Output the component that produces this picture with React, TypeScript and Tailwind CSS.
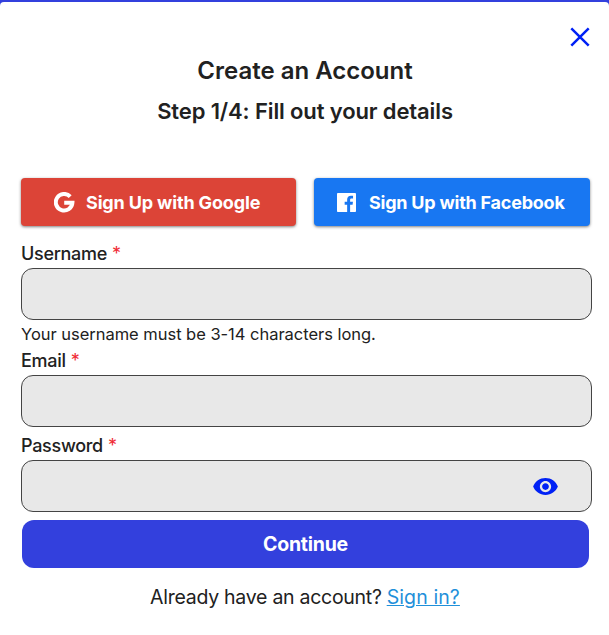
import { useState } from 'react'
import { MdVisibility } from 'react-icons/md'

const inputClass = 'block h-[52px] w-[571px] rounded-[12px] border border-[#444] bg-[#e8e8e8] px-4 text-lg outline-none'

function GoogleIcon() {
  return (
    <svg viewBox='0 0 21 21' className='h-[21px] w-[21px]' stroke='currentColor' strokeWidth='4' fill='none'>
      <path d='M16.2 4.6A8.3 8.3 0 1 0 18.4 10.8H10.2' />
    </svg>
  )
}

function FacebookIcon() {
  return (
    <svg viewBox='0 0 24 24' className='h-[19px] w-[19px]' fill='currentColor'>
      <path d='M22.676 0H1.324C.593 0 0 .593 0 1.324v21.352C0 23.408.593 24 1.324 24h11.494v-9.294H9.689v-3.621h3.129V8.41c0-3.099 1.894-4.785 4.659-4.785 1.325 0 2.464.097 2.796.141v3.24h-1.921c-1.5 0-1.792.721-1.792 1.771v2.311h3.584l-.465 3.63H16.56V24h6.115c.733 0 1.325-.592 1.325-1.324V1.324C24 .593 23.408 0 22.676 0' />
    </svg>
  )
}

function FieldLabel({ id, label }: { id: string, label: string }) {
  return (
    <label htmlFor={id} className='flex h-6 items-center gap-[5px] whitespace-nowrap text-[18px] font-medium leading-6 tracking-[-0.3px]'>
      <span>{label}</span>
      <span className='pb-px font-normal text-[#f02b35]'>*</span>
    </label>
  )
}

function App() {
  const [showPassword, setShowPassword] = useState(false)

  return (
    <div className="h-[635px] w-[609px] overflow-hidden bg-[#3340dd] pt-[2px] font-['Inter',sans-serif] text-[#212121]">
      <div className='flex h-[633px] flex-col rounded-t-[4px] bg-white pl-[21px]'>
        <div className='flex h-[49px] justify-end pr-[19px] pt-[25px]'>
          <button type='button' aria-label='Close' className='h-5 w-5'>
            <svg viewBox='0 0 20 20' className='h-5 w-5' stroke='#0021f5' strokeWidth='2.5' fill='none'>
              <path d='M1.3 1.3 18.7 18.7M18.7 1.3 1.3 18.7' />
            </svg>
          </button>
        </div>

        <div className='flex w-[568px] flex-col items-center whitespace-nowrap'>
          <h1 className='flex h-10 items-center text-[24px] font-semibold'>Create an Account</h1>
          <h2 className='flex h-10 items-center text-[22px] font-semibold tracking-[-0.12px]'>Step 1/4: Fill out your details</h2>
        </div>

        <div className='mt-[47px] flex gap-[18px] whitespace-nowrap text-[18px] font-bold text-white'>
          <button type='button' className='flex h-12 w-[275px] items-center rounded-[4px] bg-[#dc4437] pl-[33px] shadow-[0_1px_3px_rgba(0,0,0,0.5)]'>
            <GoogleIcon />
            <span className='ml-[11px] tracking-[-0.15px]'>Sign Up with Google</span>
          </button>
          <button type='button' className='flex h-12 w-[276px] items-center rounded-[4px] bg-[#1877f2] pl-[23px] shadow-[0_1px_3px_rgba(0,0,0,0.5)]'>
            <FacebookIcon />
            <span className='ml-[13px] tracking-[-0.23px]'>Sign Up with Facebook</span>
          </button>
        </div>

        <div className='mt-4'>
          <FieldLabel id='username' label='Username' />
          <input id='username' className={`mt-[2px] ${inputClass}`} />
          <p className='flex h-7 items-center whitespace-nowrap text-[16.5px] tracking-[-0.03px]'>Your username must be 3-14 characters long.</p>
        </div>

        <div className='pt-px'>
          <FieldLabel id='email' label='Email' />
          <input id='email' type='email' className={`mt-[2px] ${inputClass}`} />
        </div>

        <div className='mt-[7px]'>
          <FieldLabel id='password' label='Password' />
          <div className='relative mt-[2px] w-[571px]'>
            <input id='password' type={showPassword ? 'text' : 'password'} className={inputClass} />
            <button type='button' aria-label='Show password' className='absolute right-[33px] top-[13px]' onClick={() => setShowPassword(!showPassword)}>
              <MdVisibility className='h-[27px] w-[27px] text-[#0021f5]' />
            </button>
          </div>
        </div>

        <button type='button' className='ml-px mt-2 h-12 w-[567px] rounded-[12px] bg-[#3340dd] pt-px text-[19.5px] font-bold tracking-[-0.25px] text-white'>Continue</button>

        <div className='mt-[15px] flex h-[30px] w-[568px] items-center justify-center gap-[5px] whitespace-nowrap text-[19.5px] tracking-[-0.27px]'>
          <span>Already have an account?</span>
          <a href='#' className='tracking-[0.1px] text-[#1f90da] underline'>Sign in?</a>
        </div>
      </div>
    </div>
  )
}

export default App
